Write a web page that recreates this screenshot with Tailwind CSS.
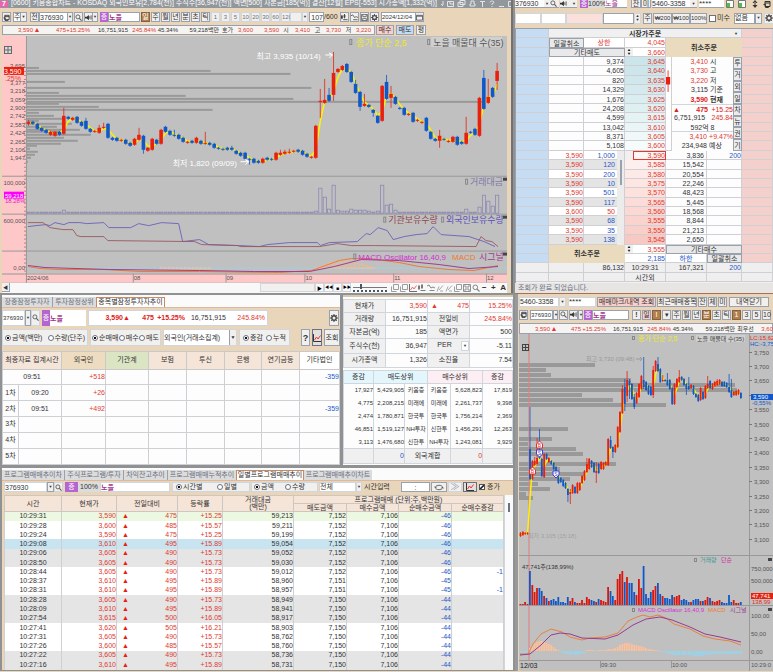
<!DOCTYPE html>
<html lang="ko">
<head>
  <meta charset="UTF-8">
  <title>노을 376930</title>
  <script src="https://cdn.jsdelivr.net/npm/@tailwindcss/browser@4"></script>
</head>
<body class="bg-[#e9d5ba] text-[#333] text-[7px] leading-[8px] min-h-screen overflow-hidden whitespace-nowrap [font-family:'Liberation_Sans','Noto_Sans_CJK_KR',sans-serif]">

  <!-- 아이콘 -->
  <svg class="hidden">
    <symbol id="i-win" viewBox="0 0 8 8"><path d="M2 1.500h5v5H2zM2 3h5M.5 4.500h2v3h3v-1" fill="none" stroke="#333"/></symbol>
    <symbol id="i-find" viewBox="0 0 8 8"><circle cx="3.300" cy="3.300" r="2.300" fill="none" stroke="#555"/><path d="M5 5l2.500 2.500" stroke="#555" stroke-width="1.200"/></symbol>
    <symbol id="i-spk" viewBox="0 0 8 8"><path d="M0 3h2l2.500-2v6L2 5H0z" fill="#333"/><path d="M5.500 2.500v3M7 1.500v5" stroke="#555" fill="none"/></symbol>
    <symbol id="i-gear" viewBox="0 0 8 8"><circle cx="4" cy="4" r="2.200" fill="none" stroke="#444" stroke-width="1.400"/><path d="M4 0v1.500M4 6.500V8M0 4h1.500M6.500 4H8M1.200 1.200l1 1M5.800 5.800l1 1M6.800 1.200l-1 1M2.200 5.800l-1 1" stroke="#444"/></symbol>
    <symbol id="i-line" viewBox="0 0 8 8"><path d="M.5 0v7.500H8" fill="none" stroke="#333"/><path d="M1.500 6l2-3 1.500 2 2.500-3.500" fill="none" stroke="#e33"/></symbol>
    <symbol id="i-candle" viewBox="0 0 8 8"><path d="M1 1v5M4 0v5M2.500 6.500h5" stroke="#444"/><path d="M0 2h2v3H0zM3 1h2v3H3z" fill="#444"/></symbol>
    <symbol id="i-wave" viewBox="0 0 8 8"><path d="M0 2l2-1 2 3 2-1 2 1M2.500 6.500h5" fill="none" stroke="#555"/></symbol>
    <symbol id="i-save" viewBox="0 0 8 8"><path d="M.5.5h7v7h-7zM2 .5v2.500h4V.5M2 7.500V5h4v2.500" fill="none" stroke="#666"/></symbol>
    <symbol id="i-cal" viewBox="0 0 8 8"><path d="M.5 1.500h7v5.500h-7z" fill="none" stroke="#555"/><path d="M.5 2.500h7" stroke="#555"/></symbol>
    <symbol id="i-copy" viewBox="0 0 8 8"><path d="M2.500.5h5v5h-5zM.5 2.500v5h5" fill="none" stroke="#777"/></symbol>
    <symbol id="i-pen" viewBox="0 0 8 8"><path d="M1 7.500l2-5M3 6l4-4.500M4 7h3" fill="none" stroke="#888"/></symbol>
    <symbol id="i-loop" viewBox="0 0 10 8"><path d="M1 4c0-2 2-2.500 4-2.500S9 2 9 4M9 4c0 2-2 2.500-4 2.500S1 6 1 4M0 3l1 1.500L2.500 3M7.500 5L9 3.500 10 5" fill="none" stroke="#555"/></symbol>
    <symbol id="i-pair" viewBox="0 0 8 8"><path d="M.5.5h7v7h-7z" fill="#fff" stroke="#777"/><path d="M1 3h3v4H1z" fill="#4cc04c"/></symbol>
    <symbol id="i-updn" viewBox="0 0 8 8"><path d="M4 0L1.500 3h5zM4 8L1.500 5h5zM3.500 2h1v4h-1z" fill="#333"/></symbol>
    <symbol id="i-winbtns" viewBox="0 0 82 8"><path d="M3 1v4M1 4l2 2M7.500 1.500h6v5h-6zM10 1.500v2.500h3.500M20 .5h5v4h-5zM18 2.500h5v4h-5zM31 1h3v3h1v2h-5V4h1zM40 1.500h5M42.500 1.500V7M50 2.500c0-2 4-2 4 0L52 4v1M52 6v1M59 6.500h5M68.500 1.500h5v5h-5zM78 2l3.500 4M81.500 2L78 6" fill="none" stroke="#e4e6e8"/></symbol>
  </svg>

  <div class="grid grid-cols-[minmax(0,1fr)_258px]">

    <!-- 왼쪽 -->
    <div class="min-w-0 bg-[#8f9192]">

      <!-- 종합차트 -->
      <section class="mr-[2px] pl-[2px] pr-[4px] bg-[#e9d5ba] border-r-2 border-[#707274]">
        <header class="-ml-[2px] -mr-[4px] h-2 flex items-center gap-[3px] bg-[#92979c] text-white leading-[6px] overflow-hidden">
          <b class="w-2 shrink-0 bg-[#f060b0] text-center">7</b>
          <h1 class="grow pb-[2px]">[0600] 키움종합차트 - KOSDAQ 외국인보유[2,784(천)] 주식수[36,947(천)] 액면[500] 자본금[185(억)] 결산[12월] EPS[-553] 시가총액[1,332(억)]</h1>
          <svg class="w-[82px] h-2 shrink-0 mr-px"><use href="#i-winbtns"/></svg>
        </header>

        <div class="flex items-center h-[16px] pt-1 pb-[2px] [&>*]:shrink-0">
          <button aria-label="창" class="w-[9px] h-[10px] border border-gray-400 bg-[#f1f0ee]"><svg class="size-[7px]"><use href="#i-win"/></svg></button>
          <select aria-label="주기" class="ml-[2px] w-2 h-[10px] border border-gray-400 bg-white appearance-none text-center"><option>주</option></select>
          <span class="w-[6px] h-[10px] border border-l-0 border-gray-400 bg-[#f1f0ee] text-[4px] text-center">▼</span>
          <button class="ml-[3px] w-[9px] h-[10px] border border-gray-400 bg-[#f1f0ee]">전</button>
          <input aria-label="종목코드" value="376930" class="w-[29px] h-[10px] border border-gray-400 bg-white">
          <span class="w-[5px] h-[10px] border border-l-0 border-gray-400 bg-[#f1f0ee] text-[4px] text-center">▼</span>
          <button aria-label="검색" class="ml-[1px] w-[9px] h-[10px] border border-gray-400 bg-[#f1f0ee]"><svg class="size-[7px]"><use href="#i-find"/></svg></button>
          <button aria-label="소리" class="ml-[1px] w-[9px] h-[10px] border border-gray-400 bg-[#f1f0ee]"><svg class="size-[7px]"><use href="#i-spk"/></svg></button>
          <span class="w-[5px] h-[10px] border border-l-0 border-gray-400 bg-[#f1f0ee] text-[4px] text-center">▼</span>
          <span class="ml-[2px] w-2 h-[10px] bg-[#b565d0] text-white text-center leading-[10px]">증</span>
          <input aria-label="종목명" value="노을" class="w-[32px] h-[10px] border border-gray-400 bg-white text-[#a0328c] font-bold">
          <div class="flex gap-px ml-px" id="periods"></div>
          <span class="w-[12px] h-[10px] border border-gray-300 bg-[#f1f0ee]"></span>
          <span class="w-[6px] h-[10px] border border-gray-300 bg-[#f1f0ee] text-[4px] text-center">▼</span>
          <input aria-label="봉수" value="107" class="ml-px w-[15px] h-[10px] border border-gray-400 bg-white text-right">
          <span class="w-[16px]">/600</span>
          <button aria-label="봉" class="w-[9px] h-[10px] border border-gray-400 bg-[#f1f0ee]"><svg class="size-[7px]"><use href="#i-candle"/></svg></button>
          <button aria-label="지표" class="ml-px w-[9px] h-[10px] border border-gray-400 bg-[#f1f0ee]"><svg class="size-[7px]"><use href="#i-wave"/></svg></button>
          <button aria-label="저장" class="ml-px w-[9px] h-[10px] border border-gray-400 bg-[#f1f0ee]"><svg class="size-[7px]"><use href="#i-save"/></svg></button>
          <button aria-label="설정" class="ml-px w-[9px] h-[10px] border border-gray-400 bg-[#f1f0ee]"><svg class="size-[7px]"><use href="#i-gear"/></svg></button>
          <input aria-label="날짜" value="2024/12/04" class="ml-[2px] w-[34px] h-[10px] border border-r-0 border-gray-400 bg-white text-[6px]">
          <button aria-label="달력" class="w-[9px] h-[10px] border border-gray-400 bg-[#f1f0ee]"><svg class="size-[7px]"><use href="#i-cal"/></svg></button>
        </div>

        <div class="flex items-center h-[11px] mb-px">
          <div class="flex items-center h-[10px] grow max-w-[373px] border border-gray-400 bg-[#f5f4f2] text-[#e03a30] text-[6px] [&>span]:shrink-0">
            <span class="w-[30px] text-right">3,590</span><span class="w-2 text-center text-[7px]">▲</span>
            <span class="w-[25px] text-right">475</span><span class="w-[24px] text-right">+15.25%</span>
            <span class="w-[38px] text-right text-[#333]">16,751,915</span>
            <span class="w-[28px] text-right">245.84%</span><span class="w-[22px] text-right text-[#333]">45.34%</span>
            <span class="w-[41px] text-right text-[#333]">59,218백만</span>
            <span class="w-[17px] text-center text-[#333]">호가</span>
            <span class="w-[17px] text-right">3,600</span><span class="w-[26px] text-right">3,590</span>
            <span class="w-[14px] text-center text-[#333]">시</span><span class="w-[17px] text-right">3,410</span>
            <span class="w-[15px] text-center text-[#333]">고</span><span class="w-[16px] text-right">3,730</span>
            <span class="w-[15px] text-center text-[#333]">저</span><span class="w-[15px] text-right">3,220</span>
          </div>
          <button class="ml-px w-[18px] h-[10px] border border-gray-400 bg-[#f7cfcc]">매수</button>
          <button class="ml-[2px] w-[18px] h-[10px] border border-gray-400 bg-[#c3dbf3]">매도</button>
          <button class="ml-[2px] w-[10px] h-[10px] border border-gray-400 bg-[#f1f0ee]">평</button>
        </div>

        <svg id="week" viewBox="2 35 506 247" class="block w-full bg-[#c0c0c0]"></svg>

        <div class="flex items-center h-[10px] bg-[#f8f8f8] [&>*]:shrink-0">
          <button aria-label="왼쪽" class="w-2 h-[9px] border-r border-b border-gray-400 bg-[#f1f0ee] text-[5px]">◀</button>
          <span class="grow"></span>
          <span class="w-[55px] h-[9px] border border-gray-300 bg-[#f1f0ee]"></span>
          <button aria-label="재생" class="w-[9px] h-[9px] border border-gray-300 text-[5px] leading-[6px] text-black">▶</button>
          <button aria-label="뒤로" class="w-[9px] h-[9px] border border-gray-300 text-[4px] leading-[6px] text-black">◀◀</button>
          <button aria-label="정지" class="w-[9px] h-[9px] border border-gray-300 text-[5px] leading-[6px] text-black">■</button>
          <button aria-label="앞으로" class="w-[9px] h-[9px] border border-gray-300 text-[4px] leading-[6px] text-black">▶▶</button>
          <input type="range" aria-label="속도" value="22" class="w-[34px] h-[8px] mx-[2px] appearance-none border-b-2 border-dotted border-gray-600 bg-[linear-gradient(#777,#777)] bg-[length:100%_1px] bg-[position:0_3px] bg-no-repeat [&::-webkit-slider-thumb]:appearance-none [&::-webkit-slider-thumb]:w-[2px] [&::-webkit-slider-thumb]:h-[5px] [&::-webkit-slider-thumb]:bg-gray-600">
          <span class="flex gap-px ml-[2px]" id="draw-tools"></span>
          <span class="flex w-[24px] justify-between ml-[2px] mr-px text-[8px] font-bold"><span>−</span><span>+</span><span>A</span></span>
        </div>
      </section>

      <!-- 투자자 추이 / 종목 정보 -->
      <section class="mt-[2px] ml-[2px] mr-[2px] flex gap-[3px] h-[170px]">
        <div class="grow min-w-0 bg-[#e9d5ba] flex flex-col">
          <nav class="flex h-[13px] bg-[#fbfbfb] pt-[2px] border-b border-[#d9b9a0]">
            <button class="w-[51px] bg-[#dcdcdc] text-gray-500 border-r border-gray-400">장중잠정투자자</button>
            <button class="w-[43px] bg-[#dcdcdc] text-gray-500">투자잠정상위</button>
            <button class="w-[69px] bg-white border border-b-0 border-[#c88868]">종목별잠정투자자추이</button>
          </nav>
          <div class="flex items-center h-[20px]">
            <input aria-label="코드" value="376930" class="w-[23px] h-[16px] border border-gray-300 bg-white text-[6px]">
            <button aria-label="펼침" class="w-[6px] h-[16px] border border-gray-400 bg-[#f1f0ee] text-[4px]">▼</button>
            <button aria-label="찾기" class="w-[9px] h-[16px] border border-gray-300 bg-[#f1f0ee]"><svg class="size-[7px]"><use href="#i-find"/></svg></button>
            <span class="ml-[2px] w-2 h-[16px] bg-[#b565d0] text-white text-center leading-[15px]">증</span>
            <input aria-label="이름" value="노을" class="w-[36px] h-[16px] bg-white text-[#a0328c] font-bold">
            <div class="ml-[2px] flex items-center w-[180px] h-[16px] border border-gray-300 bg-white text-[#e03a30]">
              <b class="w-[34px] text-right text-[#e02018]">3,590</b><b class="w-[7px] text-[#e02018]">▲</b><b class="w-[24px] text-right text-[#e02018]">475</b><b class="w-[31px] text-right text-[#e02018]">+15.25%</b>
              <span class="w-[41px] text-right text-[#333]">16,751,915</span><span class="w-[39px] text-right">245.84%</span>
            </div>
            <span class="grow"></span>
            <button aria-label="설정" class="mr-px w-[10px] h-[16px] border border-gray-400 bg-[#f1f0ee]"><svg class="size-2"><use href="#i-gear"/></svg></button>
          </div>
          <div class="flex items-center h-[20px] gap-[2px] [&>*]:shrink-0">
            <div class="flex items-center justify-between w-[86px] h-[17px] px-[2px] bg-[#f1f0ee] border border-gray-300" id="r-unit"></div>
            <div class="flex items-center justify-between w-[71px] h-[17px] px-px bg-[#f1f0ee] border border-gray-300" id="r-side"></div>
            <div class="flex w-[74px] h-[17px] bg-white border border-gray-300">
              <select aria-label="투자자" class="grow appearance-none"><option>외국인(거래소집계)</option></select>
              <span class="w-[7px] bg-[#f1f0ee] border-l border-gray-400 text-[5px] leading-[15px] text-center">▼</span>
            </div>
            <div class="flex items-center justify-between w-[51px] h-[17px] px-[3px] bg-[#f1f0ee] border border-gray-300" id="r-acc"></div>
            <span class="grow"></span>
            <button class="w-[9px] h-[17px] border border-gray-400 bg-[#f1f0ee] font-bold text-[9px]">?</button>
            <button aria-label="차트" class="w-[10px] h-[17px] border border-gray-500 bg-[#e1e0de]"><svg class="size-2"><use href="#i-line"/></svg></button>
            <button class="w-[16px] h-[17px] border border-gray-400 bg-[#f1f0ee]">조회</button>
          </div>
          <table class="mt-[3px] table-fixed w-full grow bg-[#fdfdfe] border-collapse">
            <colgroup><col class="w-[16px]"><col class="w-[43px]"><col class="w-[44px]"><col class="w-[43px]"><col class="w-[38px]"><col class="w-[38px]"><col class="w-[37px]"><col class="w-[38px]"><col></colgroup>
            <thead>
              <tr class="h-[18px] bg-[#f5e4d8] [&>th]:border [&>th]:border-[#c9c9c9] [&>th]:font-normal">
                <th colspan="2">최종자료 집계시간</th><th class="bg-[#eddcc0]">외국인</th><th class="bg-[#dbe5c4]">기관계</th><th>보험</th><th>투신</th><th>은행</th><th>연기금등</th><th class="bg-white">기타법인</th>
              </tr>
            </thead>
            <tbody id="investors"></tbody>
          </table>
        </div>

        <div class="w-[170px] shrink-0 bg-[#fdfdfe] border-t-2 border-[#d8c8b0]">
          <table class="table-fixed w-full h-[69px] mt-[2px] border-collapse">
            <colgroup><col class="w-[42px]"><col class="w-[42px]"><col class="w-[42px]"><col></colgroup>
            <tbody id="summary"></tbody>
          </table>
          <table class="table-fixed w-full h-[94px] mt-[2px] border-collapse text-[6px]">
            <colgroup><col class="w-[30px]"><col class="w-[31px]"><col class="w-[23px]"><col class="w-[23px]"><col class="w-[32px]"><col></colgroup>
            <thead>
              <tr class="h-[13px] [&>th]:border [&>th]:border-gray-300 [&>th]:font-normal text-[7px]">
                <th class="bg-[#e3f6fc]">증감</th><th colspan="2" class="bg-[#e3f6fc]">매도상위</th><th colspan="2" class="bg-[#fdeef3]">매수상위</th><th class="bg-[#fdeef3]">증감</th>
              </tr>
            </thead>
            <tbody id="brokers"></tbody>
          </table>
        </div>
      </section>

      <!-- 프로그램매매 -->
      <section class="mt-[3px] ml-[2px] mr-[2px] bg-[#e9d5ba]">
        <nav class="flex h-[13px] pt-[2px] bg-[#fbfbfb] border-b border-[#d9b9a0] text-gray-500">
          <button class="w-[63px] bg-[#dcdcdc] border-r border-gray-400">프로그램매매추이차</button>
          <button class="w-[59px] bg-[#dcdcdc] border-r border-gray-400">주식프로그램/투자</button>
          <button class="w-[44px] bg-[#dcdcdc] border-r border-gray-400">차익잔고추이</button>
          <button class="w-[68px] bg-[#dcdcdc]">프로그램매매누적추이</button>
          <button class="w-[68px] bg-white border border-b-0 border-[#c88868] text-[#333]">일별프로그램매매추이</button>
          <button class="w-[68px] bg-[#dcdcdc]">프로그램매매추이차트</button>
        </nav>
        <div class="flex items-center h-[13px] pl-[2px] [&>*]:shrink-0">
          <input aria-label="코드" value="376930" class="w-[43px] h-[10px] border border-gray-300 bg-white">
          <span class="w-[7px] h-[10px] border border-gray-400 bg-[#f1f0ee] text-[4px] text-center">▼</span>
          <button aria-label="찾기" class="w-[9px] h-[10px] border border-gray-300 bg-[#f1f0ee]"><svg class="size-[7px]"><use href="#i-find"/></svg></button>
          <span class="ml-[2px] w-[13px] h-[10px] bg-[#b565d0] text-white text-center leading-[10px]">증</span>
          <span class="w-[22px] h-[10px] bg-[#dcdcdc] text-center leading-[10px]">100%</span>
          <input aria-label="이름" value="노을" class="w-[70px] h-[10px] border border-gray-300 bg-white text-[#a0328c] font-bold">
          <div class="ml-[2px] flex items-center justify-between w-[78px] h-[10px] px-[3px] pr-[12px] bg-[#f1f0ee] border border-gray-300" id="r-term"></div>
          <div class="ml-px flex items-center justify-between w-[67px] h-[10px] pl-[2px] pr-[12px] bg-[#f1f0ee] border border-gray-300" id="r-kind"></div>
          <select aria-label="구분" class="ml-px w-[37px] h-[10px] border border-gray-300 bg-white appearance-none"><option>전체</option></select>
          <span class="w-[6px] h-[10px] border border-gray-300 bg-[#f1f0ee] text-[4px] text-center">▼</span>
          <label for="time" class="ml-[2px] w-[37px]">시간입력</label>
          <input id="time" value=":" class="w-[29px] h-[10px] border border-gray-400 bg-white text-center">
          <button aria-label="갱신" class="ml-px w-[16px] h-[10px] border border-gray-400 bg-[#f1f0ee] flex justify-center items-center"><svg class="w-[10px] h-[7px]"><use href="#i-loop"/></svg></button>
          <button class="ml-px w-[14px] h-[10px] border border-gray-300 bg-[#f1f0ee] text-gray-400 text-[9px]">≫</button>
          <button aria-label="차트" class="ml-px w-[14px] h-[10px] border border-gray-500 bg-[#e1e0de] flex justify-center"><svg class="size-2"><use href="#i-line"/></svg></button>
          <label class="flex items-center gap-[2px] ml-[2px]"><input type="checkbox" checked class="appearance-none size-[6px] border border-gray-600 bg-white checked:bg-[linear-gradient(135deg,#fff_30%,#222_45%,#222_60%,#fff_70%)]">증가</label>
        </div>
        <div class="flex pl-[2px]">
          <table class="table-fixed grow min-w-0 w-full h-[175px] mt-px border-collapse bg-white leading-[8px]">
            <colgroup><col class="w-[57px]"><col class="w-[55px]"><col class="w-[61px]"><col class="w-[45px]"><col class="w-[71px]"><col class="w-[53px]"><col class="w-[52px]"><col class="w-[53px]"><col></colgroup>
            <thead class="leading-[7px] bg-[#f5e4d8] [&_th]:border [&_th]:border-[#cfc6c0] [&_th]:font-normal">
              <tr><th rowspan="2">시간</th><th rowspan="2">현재가</th><th rowspan="2">전일대비</th><th rowspan="2">등락률</th><th rowspan="2">거래대금<br>(백만)</th><th colspan="4">프로그램매매 (단위:주,백만원)</th></tr>
              <tr><th>매도금액</th><th>매수금액</th><th>순매수금액</th><th>순매수증감</th></tr>
            </thead>
            <tbody id="ticks"></tbody>
          </table>
          <div class="w-[9px] shrink-0 mt-px bg-[#fafafa] border-l border-gray-300 flex justify-center pt-2"><span class="w-[2px] h-[9px] bg-gray-500"></span></div>
        </div>
      </section>
    </div>

    <!-- 오른쪽 -->
    <div class="min-w-0 overflow-hidden">

      <!-- 호가 주문 -->
      <section class="h-[294px] border-b-2 border-[#a87050]">
        <div class="flex items-start h-[9px] overflow-hidden [&>*]:shrink-0">
          <input aria-label="코드" value="376930" class="w-[29px] h-2 border-b border-gray-400 bg-white">
          <span class="w-[6px] h-2 bg-[#f1f0ee] border-b border-gray-400 text-[4px] text-center">▼</span>
          <button aria-label="찾기" class="w-[9px] h-2 border-b border-gray-400 bg-[#f1f0ee]"><svg class="size-[7px]"><use href="#i-find"/></svg></button>
          <button aria-label="소리" class="ml-px w-[11px] h-2 border-b border-gray-400 bg-[#f1f0ee]"><svg class="size-[7px]"><use href="#i-spk"/></svg></button>
          <span class="w-[6px] h-2 bg-[#f1f0ee] border-b border-gray-400 text-[4px] text-center">▼</span>
          <span class="ml-[3px] w-2 h-2 bg-[#b565d0] text-white text-center">증</span>
          <span class="w-[17px] h-2 bg-[#dcdcdc] text-center">100%</span>
          <input aria-label="이름" value="노을" class="w-[22px] h-2 bg-white text-[#a0328c] border-b border-gray-400">
          <button class="ml-[4px] w-[10px] h-2 border-x border-b border-gray-400 bg-[#f1f0ee] leading-[7px]">잔</button>
          <button class="w-[10px] h-2 border-x border-b border-gray-400 bg-[#f1f0ee] leading-[7px]">미</button>
          <select aria-label="계좌" class="ml-px w-[38px] h-2 bg-white appearance-none border-b border-gray-400"><option>5460-3358</option></select>
          <span class="w-[7px] h-2 bg-[#f1f0ee] border-b border-gray-400 text-[4px] text-center">▼</span>
          <input type="text" aria-label="비밀번호" value="****" class="ml-[2px] w-[25px] h-2 bg-white border-b border-gray-400 text-[8px]">
          <svg class="ml-[2px] size-2"><use href="#i-pair"/></svg><svg class="ml-[4px] size-2"><use href="#i-pair"/></svg><svg class="ml-[5px] size-2"><use href="#i-updn"/></svg><svg class="ml-[4px] size-2"><use href="#i-win"/></svg>
        </div>
        <div class="flex items-center h-[16px] mt-px [&>*]:shrink-0">
          <span class="w-[26px] h-[11px] bg-white border border-gray-300"></span><span class="w-[25px] h-[11px] bg-white border border-gray-300"></span><span class="w-[37px] h-[11px] bg-[#fbdfdb] border border-gray-300"></span>
          <input aria-label="수량" class="w-[31px] h-[11px] bg-white border border-gray-400">
          <button aria-label="증감" class="w-[7px] h-[11px] border border-gray-300 bg-[#f1f0ee] text-[4px] leading-[4px]">▲<br>▼</button>
          <button class="ml-[2px] w-[9px] h-[11px] border border-gray-400 bg-[#f1f0ee]">주</button>
          <button class="ml-px w-[19px] h-[11px] border border-gray-400 bg-[#f1f0ee] text-[6px]">₩200</button>
          <button class="w-[18px] h-[11px] border border-gray-400 bg-[#f1f0ee] text-[6px]">₩100</button>
          <button class="w-[17px] h-[11px] border border-gray-400 bg-[#f1f0ee] text-[6px]">100%</button>
          <label class="ml-[2px] w-[24px] flex items-center gap-px"><input type="checkbox" class="appearance-none size-[7px] border border-gray-500 bg-white">미수</label>
          <select aria-label="조건" class="ml-px w-[21px] h-[11px] border border-gray-400 bg-white appearance-none"><option>없음</option></select>
          <span class="w-[7px] h-[11px] border border-gray-400 bg-[#f1f0ee] text-[4px] text-center">▼</span>
          <button aria-label="설정" class="ml-[2px] w-[10px] h-[11px] bg-[#f1f0ee] border border-gray-300"><svg class="size-2"><use href="#i-gear"/></svg></button>
        </div>
        <div class="mt-[2px] bg-[#f1f0ee] border-l border-t border-gray-400 pb-px">
          <div id="book" class="grid h-[253px] grid-cols-[33px_35px_41px_41px_6px_35px_26px_9px_minmax(0,1fr)] grid-rows-[repeat(27,minmax(0,1fr))] leading-[9px]"></div>
        </div>
        <p class="pl-[3px] pt-px h-[10px] bg-[#e6e5e4] text-gray-500">조회가 완료 되었습니다.</p>
      </section>

      <!-- 분봉 차트 -->
      <section class="border-l-[3px] border-[#97999a] pl-px">
        <div class="flex items-center h-[14px] pt-px [&>*]:shrink-0">
          <select aria-label="계좌" class="w-[40px] h-[10px] border border-gray-300 bg-white appearance-none"><option>5460-3358</option></select>
          <span class="w-[7px] h-[10px] border border-gray-300 bg-[#f1f0ee] text-[4px] text-center">▼</span>
          <input aria-label="비밀번호" value="****" class="ml-[2px] w-[28px] h-[10px] border border-gray-300 bg-white text-[8px]">
          <button class="ml-px w-[59px] h-[10px] border border-gray-400 bg-[#f7cfcc]">매매마크/내역 조회</button>
          <button class="ml-px w-[40px] h-[10px] border border-gray-400 bg-[#f1f0ee]">최근매매종목</button>
          <button class="ml-px w-[9px] h-[10px] border border-gray-400 bg-[#f1f0ee]">잔</button>
          <button class="ml-px w-[9px] h-[10px] border border-gray-400 bg-[#f1f0ee]">체</button>
          <button class="ml-px w-[9px] h-[10px] border border-gray-400 bg-[#f1f0ee]">미</button>
          <button class="ml-[2px] w-[40px] h-[10px] border border-gray-400 bg-[#f1f0ee]">내역닫기</button>
        </div>
        <div class="flex items-center h-[13px] overflow-hidden [&>*]:shrink-0">
          <button aria-label="창" class="w-[9px] h-[10px] border border-gray-400 bg-[#f1f0ee]"><svg class="size-[7px]"><use href="#i-win"/></svg></button>
          <input aria-label="종목코드" value="376930" class="ml-[2px] w-[23px] h-[10px] border border-gray-400 bg-white text-[6px]">
          <span class="w-[5px] h-[10px] border border-gray-400 bg-[#f1f0ee] text-[4px] text-center">▼</span>
          <button aria-label="찾기" class="ml-px w-[9px] h-[10px] border border-gray-400 bg-[#f1f0ee]"><svg class="size-[7px]"><use href="#i-find"/></svg></button>
          <button aria-label="소리" class="ml-px w-[9px] h-[10px] border border-gray-400 bg-[#f1f0ee]"><svg class="size-[7px]"><use href="#i-spk"/></svg></button>
          <span class="w-[5px] h-[10px] border border-gray-400 bg-[#f1f0ee] text-[4px] text-center">▼</span>
          <span class="ml-px w-2 h-[10px] bg-[#b565d0] text-white text-center leading-[10px]">증</span>
          <input aria-label="종목명" value="노을" class="w-[37px] h-[10px] border border-gray-400 bg-white text-[#a0328c] font-bold">
          <button class="ml-[3px] w-[9px] h-[10px] border border-gray-400 bg-[#f1f0ee] font-bold">!</button>
          <div class="flex gap-px ml-px" id="periods2"></div>
        </div>
        <div class="flex items-center h-[11px] mt-[2px] border border-gray-400 bg-[#f5f4f2] text-[6px] text-[#e03a30] [&>span]:shrink-0">
          <span class="w-[30px] text-right">3,590</span><span class="w-2 text-center text-[7px]">▲</span>
          <span class="w-[23px] text-right">475</span><span class="w-[25px] text-right">+15.25%</span>
          <span class="w-[37px] text-right text-[#333]">16,751,915</span><span class="w-[28px] text-right">245.84%</span><span class="w-[22px] text-right text-[#333]">45.34%</span>
          <span class="w-[42px] text-right text-[#333]">59,218백만</span><span class="w-[21px] text-center text-[#333]">최우선</span><span class="w-[17px] text-right">3,60</span>
        </div>
        <svg id="minute" viewBox="519 335 254 337" class="block w-full bg-[#c0c0c0]"></svg>
      </section>
    </div>
  </div>

  <script>
    const RED = '#e8200c', BLUE = '#1058c8';
    const $ = id => document.getElementById(id);

    // 주기 버튼
    function periodButtons(id, items) {
      $(id).innerHTML = items.map(([t, kind]) => {
        const cls = kind === 'on' ? 'w-[9px] h-[10px] border border-[#8a6038] bg-[#b08050] text-white'
          : kind === 'pink' ? 'w-[9px] h-[10px] border border-gray-400 bg-[#f7cfcc]'
          : kind === 'off' ? 'w-[9px] h-[10px] border border-gray-300 bg-[#f1f0ee] text-gray-500 text-[6px]'
          : 'w-[9px] h-[10px] border border-gray-400 bg-[#f1f0ee]';
        return `<button class="${cls}">${t}</button>`;
      }).join('');
    }
    periodButtons('periods', [['일', 'on'], ['주'], ['월'], ['년'], ['분'], ['초'], ['틱'], ['1', 'off'], ['3', 'off'], ['5', 'off'], ['10', 'off'], ['20', 'off'], ['30', 'off'], ['60', 'off'], ['120', 'off']]);
    periodButtons('periods2', [['일', 'pink'], ['I', 'on'], ['▾'], ['주'], ['월'], ['년'], ['분', 'on'], ['초'], ['틱'], ['1', 'on'], ['3'], ['5'], ['10']]);

    function radios(id, items) {
      $(id).innerHTML = items.map((t, i) => `
        <label class="flex items-center gap-px"><input type="radio" name="${id}" ${i ? '' : 'checked'}
          class="appearance-none size-[6px] rounded-full border border-gray-500 bg-white checked:bg-[radial-gradient(#111_35%,#fff_45%)]">${t}</label>`).join('');
    }
    radios('r-unit', ['금액(백만)', '수량(단주)']);
    radios('r-side', ['순매매', '매수', '매도']);
    radios('r-acc', ['증감', '누적']);
    radios('r-term', ['시간별', '일별']);
    radios('r-kind', ['금액', '수량']);

    $('draw-tools').innerHTML = ['copy', 'copy', 'line', 'candle', 'wave', 'pen', 'pen', 'copy', 'save', 'find']
      .map(n => `<svg class="size-2 opacity-70"><use href="#i-${n}"/></svg>`).join('');

    // 투자자 표
    const inv = [['', '09:51', '+518', '-359'], ['1차', '09:20', '+26', ''], ['2차', '09:51', '+492', '-359'], ['3차', '', '', ''], ['4차', '', '', ''], ['5차', '', '', '']];
    $('investors').innerHTML = inv.map((r, i) => `
      <tr class="[&>td]:border [&>td]:border-[#cfcfd4] text-center">
        ${i ? `<td>${r[0]}</td><td>${r[1]}</td>` : `<td colspan="2">${r[1]}</td>`}
        <td class="text-right text-[#e03a30]">${r[2]}</td><td></td><td></td><td></td><td></td><td></td>
        <td class="text-right text-[#2858c8]">${r[3]}</td>
      </tr>`).join('');

    // 종목 정보
    $('summary').innerHTML = `
      ${[['현재가', '3,590', '', '15.25%'], ['거래량', '16,751,915', '전일비', '245.84%'], ['자본금(억)', '185', '액면가', '500'], ['주식수(천)', '36,947', 'PER', '-5.11'], ['시가총액', '1,326', '소진율', '7.54']].map((r, i) => `
      <tr class="[&>*]:border [&>*]:border-gray-300">
        <th class="bg-[#f0f0f1] font-normal">${r[0]}</th>
        <td class="text-right ${i ? '' : 'text-[#e03a30]'}">${r[1]}</td>
        ${i ? `<th class="bg-[#f0f0f1] font-normal">${i === 3 ? '<span class="flex"><span class="grow">PER</span><span class="w-2 border border-gray-300 bg-white text-[4px]">▼</span></span>' : r[2]}</th>`
          : '<td class="text-[#e03a30]"><span class="flex justify-between pl-[3px]"><span>▲</span>475</span></td>'}
        <td class="text-right ${i < 2 ? 'text-[#e03a30]' : ''}">${r[3]}</td>
      </tr>`).join('')}`;

    $('brokers').innerHTML = [
      ['17,927', '5,429,905', '키움증', '키움증', '5,628,823', '17,819'],
      ['4,775', '2,208,215', '미래에', '미래에', '2,261,737', '9,398'],
      ['2,474', '1,780,871', '한국투', '한국투', '1,756,214', '2,369'],
      ['46,851', '1,519,127', 'NH투자', '신한투', '1,456,291', '12,263'],
      ['3,113', '1,476,680', '신한투', 'NH투자', '1,243,081', '3,929']
    ].map(r => `<tr class="[&>td]:border-x [&>td]:border-gray-300 text-right">
        <td>${r[0]}</td><td>${r[1]}</td><td class="text-center">${r[2]}</td><td class="text-center">${r[3]}</td><td>${r[4]}</td><td>${r[5]}</td>
      </tr>`).join('') + `
      <tr class="[&>td]:border [&>td]:border-gray-300 bg-[#f0f0f1] text-right text-[7px]">
        <td></td><td class="text-[#2858c8]">0</td><td colspan="2" class="text-center">외국계합</td><td class="text-[#e03a30]">0</td><td></td>
      </tr>`;

    // 시간별 체결
    const ticks = `10:29:31 3,590 475 +15.25 59,213 7,152 -46
10:29:28 3,600 485 +15.57 59,211 7,152 -46
10:29:24 3,590 475 +15.25 59,199 7,152 -46
10:29:08 3,610 495 +15.89 59,054 7,152 -46
10:29:06 3,605 490 +15.73 59,052 7,152 -46
10:28:50 3,605 490 +15.73 59,030 7,152 -46
10:28:44 3,605 490 +15.73 59,012 7,152 -46 -1
10:28:37 3,610 495 +15.89 58,960 7,151 -45
10:28:31 3,610 495 +15.89 58,957 7,151 -45 -1
10:28:28 3,605 490 +15.73 58,949 7,150 -44
10:28:09 3,610 495 +15.89 58,941 7,150 -44
10:27:54 3,615 500 +16.05 58,917 7,150 -44
10:27:41 3,620 505 +16.21 58,903 7,150 -44
10:27:31 3,605 490 +15.73 58,762 7,150 -44
10:27:26 3,600 485 +15.57 58,760 7,150 -44
10:27:22 3,605 490 +15.73 58,736 7,150 -44
10:27:16 3,610 495 +15.89 58,731 7,150 -44`.split('\n').map(l => l.split(' '));
    $('ticks').innerHTML = ticks.map((t, i) => {
      const bg = i === 0 ? 'bg-[#edf8e2]' : i === 3 ? 'bg-[#c8e4f0]' : Math.floor(i / 3) % 2 ? 'bg-[#e5e5e5]' : 'bg-white';
      return `<tr class="${bg} text-right [&>td]:border-x [&>td]:border-[#d0d0d0]">
        <td class="text-center">${t[0]}</td><td class="text-[#e03a30]">${t[1]}</td>
        <td class="text-[#e03a30]"><span class="flex justify-between pl-[5px]"><span class="text-[#e8200c]">▲</span>${t[2]}</span></td>
        <td class="text-[#e03a30]">${t[3]}</td><td>${t[4]}</td><td>${t[5]}</td><td>7,106</td>
        <td class="text-[#2858c8]">${t[6]}</td><td class="text-[#2858c8]">${t[7] || ''}</td></tr>`;
    }).join('');

    // 호가창: 행, 열, 행 수, 열 수
    let book = '';
    function cell(r, c, rs, cs, cls, text = '', tag = 'div') {
      book += `<${tag} class="${cls}" style="grid-area:${r}/${c}/span ${rs}/span ${cs}">${text}</${tag}>`;
    }
    const box = 'border-r border-b border-[#d0d0d4] ';
    for (let r = 1; r <= 25; r++) {
      cell(r, 1, 1, 1, box + 'bg-[#c5dcf2]');
      cell(r, 9, 1, 1, box + 'bg-[#f3d0cc]');
    }
    cell(1, 2, 1, 7, box + 'relative bg-[#f0f0f0] flex justify-center font-bold', '시장가주문<span class="absolute right-[3px] text-[4px]">▼</span>');
    cell(2, 2, 1, 1, 'border border-gray-400 bg-[#e9e9e9] leading-[7px]', '일괄취소', 'button');
    cell(2, 3, 1, 1, box + 'bg-white text-center text-[#e03a30]', '상한');
    cell(2, 4, 1, 1, box + 'bg-white text-right text-[#e03a30]', '4,045');
    cell(3, 2, 1, 2, 'border border-gray-400 bg-[#e9e9e9] leading-[7px]', '기타매도', 'button');
    cell(3, 4, 1, 1, box + 'bg-white flex justify-between text-[#e03a30]', '<span class="text-[4px] leading-[4px] text-black w-2 text-center bg-[#f1f0ee]">▲<br>▼</span>3,660');
    cell(2, 5, 2, 4, 'bg-[#eadbbf] font-bold', '취소주문', 'button');
    const sells = ['9,374', '4,605', '820', '14,329', '1,676', '24,208', '4,599', '13,042', '8,371', '5,108'];
    const sellBg = ['bg-[#cbe5ea]', 'bg-[#cde6eb]', 'bg-[#d0e8ec]', 'bg-[#d5eaee]', 'bg-[#daedf0]', 'bg-[#dff0f3]', 'bg-[#e5f3f5]', 'bg-[#eaf5f8]', 'bg-[#f0f8fa]', 'bg-[#f6fbfc]'];
    sells.forEach((v, i) => {
      cell(4 + i, 2, 1, 1, box + 'bg-[#fdfdfe]');
      cell(4 + i, 3, 1, 1, box + 'bg-[#fdfdfe] text-right', v);
      cell(4 + i, 4, 1, 1, box + 'text-right text-[#e03a30] ' + sellBg[i], (3645 - i * 5).toLocaleString('en-US'));
    });
    cell(4, 5, 10, 1, box + 'bg-white', '<svg viewBox="0 0 6 93" class="w-full"><path d="M2.500 16v26" stroke="#e8200c"/><path d="M0 24h5v9H0z" fill="#e8200c"/></svg>');
    [['3,410', '시'], ['3,730', '고'], ['3,220', '저'], ['3,115', '기준'], ['3,590', '현재']].forEach(([v, t], i) => {
      const tone = i === 4 ? 'font-bold text-[#e02018]' : i === 3 ? '' : 'text-[#e03a30]';
      cell(4 + i, 6, 1, 2, 'bg-[#fdfdfe] flex', `<span class="w-[36px] text-right ${tone}">${v}</span><span class="ml-[2px] ${i === 4 ? 'font-bold' : ''}">${t}</span>`);
    });
    cell(9, 6, 1, 2, 'bg-[#fdfdfe] flex text-[#e02018] border-t border-gray-300', '<span class="pl-px">▲</span><b class="grow text-right">475</b><span class="w-[25px] text-right">+15.25</span>');
    cell(10, 6, 1, 2, 'bg-[#fdfdfe] flex justify-between pl-[2px]', '<span>6,751,915</span><span class="text-[#e03a30]">245.84</span>');
    cell(11, 6, 1, 2, 'bg-[#fdfdfe] text-center border-b border-gray-300', '592억 8');
    cell(12, 6, 1, 2, 'bg-[#fdfdfe] flex text-[#e03a30]', '<span class="w-[35px] text-right">3,410</span><span class="grow text-right">+9.47%</span>');
    cell(13, 6, 1, 2, 'bg-[#fdfdfe] flex', '<span class="w-[35px] text-right">234,948</span><span class="ml-[2px]">예상</span>');
    book += `<div class="flex flex-col" style="grid-area:4/8/span 10/span 1">${[...'투거외일차뉴권기'].map(t =>
      `<button class="grow border border-gray-400 bg-[#ececec]">${t}</button>`).join('')}</div>`;
    const orders = [['3,590', '1,000'], ['3,590', '120'], ['3,590', '200'], ['3,590', '10'], ['3,590', '501'], ['3,590', '117'], ['3,600', '50'], ['3,590', '68'], ['3,590', '35'], ['3,590', '138']];
    const buys = ['3,836', '15,542', '20,554', '22,246', '48,423', '5,445', '18,568', '8,844', '21,213', '2,650'];
    const buyBg = ['bg-[#fdf5f4]', 'bg-[#fdefee]', 'bg-[#fdeae8]', 'bg-[#fde5e2]', 'bg-[#fce1dd]', 'bg-[#fbdcd8]', 'bg-[#fbd8d3]', 'bg-[#fad3ce]', 'bg-[#f9cfc9]', 'bg-[#f8c9c2]'];
    orders.forEach(([p, q], i) => {
      const bg = i % 2 ? 'bg-[#e4e4e4] ' : 'bg-white ';
      cell(14 + i, 2, 1, 1, box + bg + 'text-right text-[#e03a30]', p);
      cell(14 + i, 3, 1, 1, box + bg + 'text-right pr-[9px] ' + (i === 6 ? 'text-[#e03a30]' : 'text-[#2858c8]'), q);
      cell(14 + i, 4, 1, 1, (i ? box : 'ml-2 border border-[#e03a30] leading-[7px] ') + 'text-right text-[#e03a30] ' + buyBg[i], (3590 - i * 5).toLocaleString('en-US'));
      cell(14 + i, 5, 1, 2, box + 'bg-[#fdfdfe] text-right pr-[2px]', buys[i]);
      cell(14 + i, 7, 1, 2, box + 'bg-[#fdfdfe] text-right text-[#2858c8]', i ? '' : '200');
    });
    cell(14, 3, 10, 1, 'justify-self-end w-[7px] mr-px bg-[#ececec] flex justify-center pt-[9px]', '<span class="w-[2px] h-[25px] bg-gray-400"></span>');
    cell(24, 2, 2, 2, 'bg-[#eadbbf] font-bold', '취소주문', 'button');
    cell(24, 4, 1, 1, box + 'bg-white flex justify-between text-[#e03a30]', '<span class="text-[4px] leading-[4px] text-black w-2 text-center bg-[#f1f0ee]">▲<br>▼</span>3,555');
    cell(25, 4, 1, 1, box + 'bg-white text-right text-[#2858c8]', '2,185');
    cell(24, 5, 1, 4, 'border border-gray-400 bg-[#e9e9e9] leading-[7px]', '기타매수', 'button');
    cell(25, 5, 1, 2, box + 'bg-white text-center text-[#2858c8]', '하한');
    cell(25, 7, 1, 2, 'border border-gray-400 bg-[#e9e9e9] leading-[7px]', '일괄취소', 'button');
    ['', '', '86,132', '10:29:31'].forEach((t, i) => {
      cell(26, 1 + i, 1, 1, box + 'bg-[#efefef] ' + (i === 3 ? 'text-center' : 'text-right'), t);
      cell(27, 1 + i, 1, 1, box + 'bg-[#efefef] text-center', i === 3 ? '시간외' : '');
    });
    ['167,321', '200', ''].forEach((t, i) => {
      const span = i === 2 ? 1 : 2;
      cell(26, 5 + i * 2, 1, span, box + 'bg-[#efefef] text-right ' + (i === 1 ? 'text-[#2858c8]' : 'pr-[2px]'), t);
      cell(27, 5 + i * 2, 1, span, box + 'bg-[#efefef]');
    });
    $('book').innerHTML = book;

    // 차트 도형
    const rect = (x, y, w, h, fill, extra = '') => `<rect x="${x}" y="${y}" width="${w}" height="${h}" fill="${fill}" ${extra}/>`;
    const line = (pts, color, w = 1) => `<polyline points="${pts}" fill="none" stroke="${color}" stroke-width="${w}"/>`;
    const text = (x, y, t, fill, size = 7, anchor = 'start') => `<text x="${x}" y="${y}" fill="${fill}" font-size="${size}" text-anchor="${anchor}">${t}</text>`;
    // 범례 앞의 작은 네모
    const mark = (x, y, h = 6) => `<rect x="${x + .5}" y="${y + .5}" width="2" height="${h - 1}" fill="none" stroke="#888"/>`;

    // 색, 몸통 위, 몸통 아래, 고가, 저가
    function candles(src, x0, step, w) {
      const rows = src.trim().split(/\s+/).map(s => {
        const n = s.slice(1).split(',').map(Number);
        return { c: s[0] === 'r' ? RED : BLUE, t: n[0], b: n[1], hi: n[2] || n[0] - 1, lo: n[3] || n[1] + 1 };
      });
      const ma = rows.map((r, i) => {
        const p = rows[Math.max(0, i - 1)];
        return (x0 + i * step).toFixed(1) + ',' + ((r.t + r.b + p.t + p.b) / 4).toFixed(1);
      }).join(' ');
      return line(ma, '#fbf400', 1.5) + rows.map((r, i) => {
        const x = x0 + i * step;
        return rect((x - .5).toFixed(1), r.hi, 1, r.lo - r.hi, r.c, 'opacity=".8"') + rect((x - w / 2).toFixed(1), r.t, w, Math.max(1, r.b - r.t), r.c);
      }).join('');
    }

    // 일봉
    const day = `r121,123,119,125 b121,123 b123,128 b127,130 b129,132 r131,134 r131,135 b131,134 r115,133,107,134 b116,118
      r117,119 b116,122 b121,125 b120,128,117 b128,131 r130,131 r127,132,124 r126,127,122 b123,137 b137,139
      b137,140 r139,140 b139,143 b142,145 r138,144 r134,139,127 b135,149,134,153 r147,150 r138,149 b139,143
      r129,143 b126,131 b130,134 b134,135,129 b134,138 b137,141 r141,142 b140,142 r137,142 b140,143
      r142,143,131 b142,144 b143,147 b147,148 b148,149 b147,149 b147,149,145 b150,153 b152,155 b152,158
      b158,159,157,164 b158,162 b160,162 r158,162 b157,159 b158,159 r152,159 r152,154,149 r151,153,149 r151,152,148
      r150,151 b149,151 b150,154 b153,156 r156,157 r125,157 r100,101,88,117 r99,102,78 b94,100,87 r72,94,51,100
      r68,71 r65,69 b63,71 b71,81 b83,92,79 b91,106,90,110 r103,105,93 b104,106 b109,112,108,116 b115,122
      r85,120 b81,98,74 r93,97,85,107 b96,103 b107,108 b107,114 r113,114 b112,121 r119,120 r121,122
      b117,130 b131,138 b138,140 r135,140,129,147 b138,139 r140,141 r136,141 b136,144 b141,143 r132,143,116
      b131,132 b128,134 r97,135 b77,108,69 r96,102,78 b87,96 r70,80,62,89`;
    const bars = [[67, 39], [70, 211], [73, 291], [81, 65], [87, 312], [92, 59], [95, 186], [98, 294], [101, 483], [103, 59], [106, 99], [109, 213], [112, 39], [115, 54], [118, 65], [120, 39], [123, 72], [126, 57], [129, 80], [131, 60], [134, 91], [137, 64], [140, 78], [143, 61], [145, 37], [148, 30], [151, 38], [154, 35], [157, 31], [161, 28]];
    const vol = { 8: 3, 65: 2, 66: 25, 67: 16, 68: 4, 69: 28, 70: 3, 71: 2, 72: 2, 73: 4, 74: 3, 75: 3, 76: 3, 77: 2, 79: 2, 80: 28, 81: 8, 82: 9, 83: 3, 99: 4, 102: 6, 103: 18, 104: 12, 105: 7, 106: 18 };
    let s = rect(2, 35, 24, 238, '#ffc8c8') + rect(2, 273, 506, 9, '#ffc8c8');
    s += bars.map(([y, x]) => rect(26, y - 1, x - 26, 2, '#999')).join('');
    s += [175, 213, 250, 273].map(y => rect(2, y, 506, 1, '#999')).join('') + rect(26, 35, 1, 247, '#999');
    for (let y = 66; y < 272; y += 4) s += rect(24, y, 2, 1, '#a88');
    s += ['3,695', '', '3,377', '3,218', '3,059', '2,900', '2,742', '2,583', '2,424', '2,265', '2,106', '1,947'].map((t, i) => text(25, Math.round(67 + i * 8.4), t, '#555', 6, 'end')).join('');
    s += rect(4, 66, 20, 8, '#e8200c') + text(4, 73, '3,590', '#fff', 7) + text(5, 80, '.25%', '#e03a30', 7);
    s += text(25, 184, '100,000', '#555', 6, 'end') + rect(4, 191, 20, 7, '#f0f') + text(5, 197, '59,218', '#fff', 6) + text(5, 202, '18.28%', '#e020c0', 6);
    s += text(25, 222, '600,000', '#555', 6, 'end') + text(25, 269, '0,00', '#555', 6, 'end');
    s += candles(day, 28.5, 4.43, 3.600);
    for (let i = 0; i < 107; i++) {
      const h = vol[i] || 1;
      s += rect((27 + i * 4.43).toFixed(1), 212.5 - h, 3.2, h, 'none', 'stroke="#8580b0" stroke-width=".7"');
    }
    s += line('28,226 36,225 46,224 50,225 55,222 64,224 69,222 80,222 87,223 104,222 109,227 131,227 139,223 149,225 162,222 179,223 183,241 200,239 209,244 240,245 260,246 268,244 290,242 318,242 321,245 330,242 358,241 367,233 371,234 379,227 388,230 394,239 405,236 417,234 428,233 434,226 442,234 470,236 485,241 496,246', '#6a60b8', .9);
    s += line('28,222 43,222 50,227 63,229 73,229 77,235 81,236 104,236 108,240 195,241 202,244 238,245 241,246 320,246 338,243 352,245 375,245 477,246 482,236 487,240 493,241 499,246', '#985860', .9);
    s += '<path d="M28 267.500H508" stroke="#90d8f0" stroke-dasharray="3 1.500"/><path d="M160 267.500H212M315 267.500H376" stroke="#f8c8a0" stroke-dasharray="3 1"/>';
    [1, 3, 5, 6, 7, 7, 6, 5, 4, 3, 2, 1].forEach((h, i) => s += rect(320 + i * 4.5, 267 - h, 3, h, 'none', 'stroke="#f0b890" stroke-width=".7"'));
    s += line('28,266 40,268 60,269 105,269 140,271 200,271 280,272 312,270 340,260 352,258 370,258 400,262 420,266 450,269 475,270 499,265', '#ee7a30');
    s += line('28,265 45,267 110,269 200,270 255,271 310,271 335,266 362,259 400,260 440,264 470,268 499,266', '#a03c90');
    s += mark(350, 38) + text(357, 45, '종가 단순 2,5', '#f0ea20', 9) + rect(432, 36, 71, 10, '#d0d0d0') + mark(428, 38) + text(434, 45, '노을 매물대 수(35)', '#555', 9);
    s += text(257, 58, '최고 3,935 (10/14)', '#fff', 8) + line('326,54 333,54 330,52 333,54 330,57', '#fff');
    s += text(173, 165, '최저 1,820 (09/09)', '#fff', 8) + line('241,161 249,161 246,159 249,161 246,164', '#fff');
    s += mark(466, 178) + text(471, 184, '거래대금', '#7f7aa8', 9) + mark(384, 216) + text(389, 222, '기관보유수량', '#904850', 9) + mark(442, 216) + text(447, 222, '외국인보유수량', '#5a50b8', 9);
    s += mark(354, 253) + text(359, 259, 'MACD Oscillator 16,40,9', '#d030d0', 8) + text(453, 259, 'MACD', '#ee7a30', 8) + text(480, 259, '시그널', '#a03c90', 9);
    s += [177, 215, 252].map(y => rect(504, y, 4, 3, '#444')).join('');
    s += [[27, '2024/06'], [134, '08'], [227, '09'], [306, '10'], [395, '11'], [488, '12']].map(([x, t]) => rect(x - 1, 273, 1, 9, '#999') + text(x, 280, t, '#555', 6)).join('');
    s += '<rect x="4.500" y="45.500" width="7" height="7" fill="#ddd" stroke="#666"/><path d="M5 49h6M8 46v6" stroke="#666"/>';
    $('week').innerHTML = s;

    // 1분봉
    const min = `r534,537 r533,536 r534,535 r534,535 b450,480,408 r462,480 r462,466,458 r459,465,439 b452,459,430 b460,477
      r455,478 b455,460 r459,463 b462,465 b464,470 b468,478 b478,484 b479,483 b481,487 b484,489
      b490,496,489,503 r493,495,490,505 r486,494 b488,494 r484,494 r484,491 r477,484 r472,481 r465,473,459 r460,470
      b462,468 b464,473 r472,474,463,484 b465,474 r463,470 r464,470 r463,466 r440,466 b441,449,437 b448,453,447,459
      r446,453 r428,448 r413,433 r390,414,386 b388,405,380,412 r381,397,372,403 b382,386,380,400 b385,400 b398,408,395,410 r394,404
      r385,398 r377,390 b381,388,358,390 b383,391 b387,395 b388,396 r371,396,367,399 r362,372,361 b365,372,358 b370,383
      r381,382,376 b381,382 b381,386,374 b381,390 b389,405 r385,405 r380,388 r378,383,371 b378,381 b380,386
      b385,390,384,396 b387,390,378 r386,389 b387,395 b395,398 b396,402 r389,401 b393,400 r387,399 r385,389,377
      b382,389 r385,390 r383,387 r382,386,380 r381,385 b383,387 b383,387 b384,388 b388,393,375 b391,398,380
      r393,396 r392,396 r391,395 b394,399`;
    const minBars = [[366, 595], [371, 546], [376, 551], [381, 631], [386, 735], [391, 737], [396, 582], [401, 613], [406, 666], [430, 568], [440, 552], [445, 528], [450, 576], [455, 583], [465, 616], [470, 560], [475, 585], [480, 570], [485, 538], [490, 550], [495, 526], [499, 533]];
    const minVol = [1, 1, 3, 1, 34, 20, 13, 17, 17, 14, 9, 7, 4, 5, 6, 4, 8, 3, 3, 2, 8, 4, 7, 3, 2, 2, 5, 2, 8, 6, 5, 4, 3, 6, 5, 4, 3, 18, 14, 9, 5, 26, 31, 34, 23, 28, 22, 22, 13, 10, 26, 17, 39, 11, 7, 13, 15, 19, 22, 11, 9, 7, 7, 6, 10, 8, 9, 10, 5, 6, 5, 3, 3, 5, 6, 6, 4, 4, 5, 8, 7, 4, 3, 4, 5, 3, 2, 2, 10, 3, 5, 2, 2, 3];
    const osc = [-2, -2, -2, -1, 3, 6, 8, 9, 10, 10, 9, 8, 7, 6, 4, 2, 1, -1, -2, -3, -3, -4, -3, -4, -4, -3, -3, -2, 1, 1, 1, 1, -1, 1, 1, 1, 1, 2, 2, 2, 3, 4, 6, 7, 8, 8, 8, 7, 6, 6, 5, 5, 4, 3, 2, 2, 1, 1, 1, -1, -1, -1, -2, -3, -4, -4, -5, -4, -4, -4, -4, -4, -4, -5, -5, -5, -5, -5, -4, -4, -4, -3, -3, -3, -3, -3, -3, -3, -3, -3, -3, -3, -3, -3];
    const colors = min.trim().split(/\s+/).map(c => c[0] === 'r' ? '#d81810' : BLUE);
    let m = minBars.map(([y, x]) => rect(519, y - 2, x - 519, 4, '#999')).join('');
    m += rect(528, 335, 2, 327, '#e08080', 'opacity=".55"') + rect(749, 335, 1, 337, '#999') + [556, 606, 661].map(y => rect(519, y, 254, 1, '#999')).join('');
    m += candles(min, 520.5, 2.37, 1.800);
    m += minVol.map((h, i) => rect((519.5 + i * 2.37).toFixed(1), 606 - h, 1.8, h, colors[i])).join('');
    m += osc.map((h, i) => rect((519.5 + i * 2.37).toFixed(1), h > 0 ? 652 - h : 652, 1.800, Math.abs(h), h > 0 ? '#fcc09c' : '#98d4ec')).join('');
    m += line('520,655 528,655 533,645 541,635 551,630 562,633 570,638 582,641 590,639 605,638 618,634 628,622 637,618 643,616 650,618 658,616 666,619 674,625 690,630 703,637 715,640 730,642 741,646', '#e88040');
    m += line('520,656 530,655 541,646 551,636 560,634 570,635 582,639 605,640 618,636 633,626 646,620 660,618 672,621 690,628 705,635 720,638 741,643', '#983c90');
    for (let i = 0; i <= 13; i++) {
      const y = Math.round(352.5 + i * 14.4);
      m += rect(749, y, 3, 1, '#777');
      if (i !== 3) m += text(754, y + 3, (3750 - i * 50).toLocaleString('en-US'), '#555', 6);
    }
    m += [[572, '750,000'], [584, '500,000'], [619, '100,00'], [637, '50,00'], [655, '0,00']].map(([y, t]) => text(751, y, t, '#555', 6)).join('');
    m += rect(751, 395, 22, 6, BLUE) + text(753, 400, '3,590', '#fff', 6) + text(752, 406, '-0,55%', BLUE, 6);
    m += text(750, 341, 'LC:15,62', '#e03020', 6) + text(750, 347, 'HC:-3,75', BLUE, 6);
    m += rect(751, 594, 22, 6, RED) + text(752, 599, '47,741', '#fff', 6) + text(752, 605, '138,99', '#e03020', 6);
    m += mark(632, 337, 4) + text(638, 342, '종가 단순 2,5', '#f0ea20', 7) + rect(696, 336, 49, 7, '#d0d0d0') + mark(691, 337, 4) + text(697, 342, '노을 매물대 수(35)', '#444', 6);
    m += text(586, 362, '최고 3,730 (09:48)', '#999', 6) + line('636,360 642,360 640,358 642,360 640,362', '#999') + text(528, 539, '최저 3,105 (15:18)', '#a0a0a0', 6);
    m += text(522, 570, '47,741주(138,99%)', '#333', 6) + mark(694, 559, 4) + text(700, 563, '거래량', '#409898', 6) + text(721, 563, '단순', '#d030a0', 6);
    m += mark(632, 609, 4) + text(638, 613, 'MACD Oscillator 16,40,9', '#d030d0', 6) + text(708, 613, 'MACD', '#ee7a30', 6) + text(730, 613, '시그널', '#983c90', 6);
    m += [559, 609].map(y => rect(768, y, 4, 3, '#444')).join('');
    m += text(520, 669, '12/03', '#222', 7) + rect(600, 661, 1, 8, '#999') + text(601, 668, '09:30', '#555', 6) + rect(671, 661, 1, 8, '#999') + text(672, 668, '10:00', '#555', 6) + text(751, 668, '10:29:0', '#555', 6);
    // 매매 표시
    m += [[539.5, 446, 'B'], [532.5, 472, 'B'], [539.5, 454, 'S'], [556, 475, 'S']].map(([x, y, t]) => {
      const c = t === 'B' ? '#e03030' : '#4040d0';
      const d = t === 'B' ? `M${x - 3} ${y + 3}v-4l3-3 3 3v4z` : `M${x - 3} ${y - 3}h6v4l-3 3-3-3z`;
      return `<path d="${d}" fill="#fff" stroke="${c}"/>` + text(x, y + 2, t, c, 5, 'middle');
    }).join('');
    m += '<rect x="522.500" y="345.500" width="6" height="6" fill="none" stroke="#444"/><path d="M523 348.500h6M525.500 346v6" stroke="#444"/>';
    $('minute').innerHTML = m;
  </script>
</body>
</html>
